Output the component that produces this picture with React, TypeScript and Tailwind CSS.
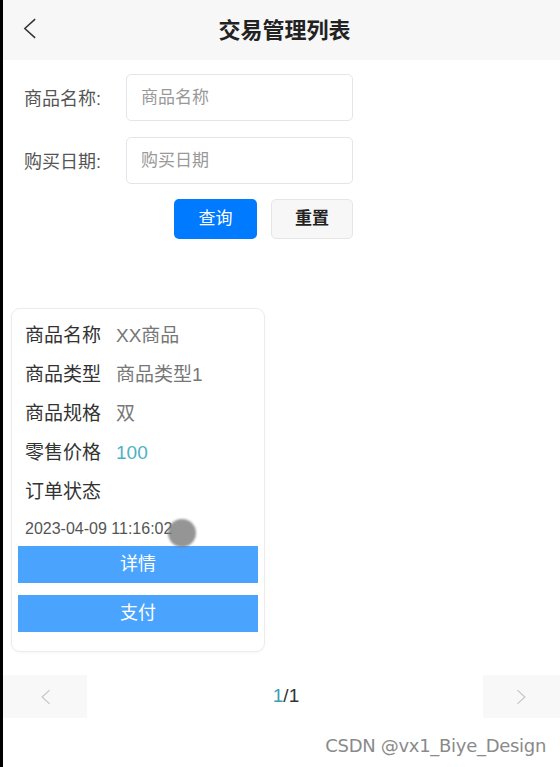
import React from 'react';

const rows = [
  { label: '商品名称', value: 'XX商品' },
  { label: '商品类型', value: '商品类型1' },
  { label: '商品规格', value: '双' },
  { label: '零售价格', value: '100', accent: true },
  { label: '订单状态', value: '' },
];

const font = { fontFamily: '"Liberation Sans", "Noto Sans CJK SC", sans-serif' };

const Chevron: React.FC<{ dir: 'left' | 'right'; className?: string }> = ({ dir, className }) => (
  <svg viewBox="0 0 16 24" className={className} fill="none" stroke="currentColor" strokeWidth={1.6}>
    {dir === 'left' ? <polyline points="14,2 3,12 14,22" /> : <polyline points="2,2 13,12 2,22" />}
  </svg>
);

export default function App() {
  return (
    <div className="min-h-[767px] w-[560px] bg-white border-l-[3px] border-black relative" style={font}>
      {/* header */}
      <div className="relative h-[60px] bg-[#f7f7f7] flex items-center justify-center">
        <Chevron dir="left" className="absolute left-[19px] top-[17px] w-[15px] h-[23px] text-[#333]" />
        <h1 className="text-[22px] font-bold text-[#222] pl-[6px]">交易管理列表</h1>
      </div>

      {/* search form */}
      <div className="pt-[14px] pl-[21px] w-[350px]">
        <div className="flex items-center gap-4 mb-4">
          <span className="w-[86px] text-[18px] text-[#555] pt-[3px]">商品名称:</span>
          <div className="flex-1 h-[47px] border border-[#e3e5ea] rounded-[5px] flex items-center px-[14px] text-[17px] text-[#999]">
            商品名称
          </div>
        </div>
        <div className="flex items-center gap-4">
          <span className="w-[86px] text-[18px] text-[#555] pt-[3px]">购买日期:</span>
          <div className="flex-1 h-[47px] border border-[#e3e5ea] rounded-[5px] flex items-center px-[14px] text-[17px] text-[#999]">
            购买日期
          </div>
        </div>
        <div className="flex justify-end gap-[14px] mt-[15px]">
          <button className="w-[83px] h-[40px] rounded-[5px] bg-[#007aff] text-white text-[17px]">查询</button>
          <button className="w-[82px] h-[40px] rounded-[5px] bg-[#f7f7f7] border border-[#e6e6e6] text-[#222] text-[17px] font-semibold">
            重置
          </button>
        </div>
      </div>

      {/* list card */}
      <div className="ml-[8px] mt-[69px] w-[254px] border border-[#ececec] rounded-[9px] pt-[8px] pb-[19px] px-[6px] shadow-[0_1px_3px_rgba(0,0,0,0.04)]">
        {rows.map((r) => (
          <div key={r.label} className="flex items-center h-[39px] pl-[7px] text-[19px]">
            <span className="text-[#333] w-[91px]">{r.label}</span>
            <span className={r.accent ? 'text-[#4cb2c2]' : 'text-[#777]'}>{r.value}</span>
          </div>
        ))}
        <div className="pl-[7px] h-[34px] flex items-center text-[16px] text-[#555]">2023-04-09 11:16:02</div>
        <button className="w-full h-[37px] bg-[#4aa4fd] text-white text-[18px]">详情</button>
        <button className="w-full h-[37px] mt-[12px] bg-[#4aa4fd] text-white text-[18px]">支付</button>
      </div>

      {/* touch indicator */}
      <div className="absolute left-[165px] top-[519px] w-[28px] h-[28px] rounded-full bg-[#7a7a7a]/80 blur-[1px]" />

      {/* pagination */}
      <div className="mt-[23px] flex items-center justify-between h-[43px]">
        <div className="w-[84px] h-full bg-[#f8f8f9] flex items-center justify-center">
          <Chevron dir="left" className="w-[11px] h-[18px] text-[#c4c4c4]" />
        </div>
        <div className="text-[19px] text-[#333] pl-[2px]">
          <span className="text-[#3aa0b8]">1</span>/1
        </div>
        <div className="w-[77px] h-full bg-[#f8f8f9] flex items-center justify-center">
          <Chevron dir="right" className="w-[11px] h-[18px] text-[#c4c4c4]" />
        </div>
      </div>

      <div className="flex justify-end pr-[14px] mt-[14px] text-[18px] text-[#8a8a8a]" style={{ fontFamily: '"DejaVu Sans", sans-serif', letterSpacing: '-0.3px' }}>
        CSDN @vx1_Biye_Design
      </div>
    </div>
  );
}
